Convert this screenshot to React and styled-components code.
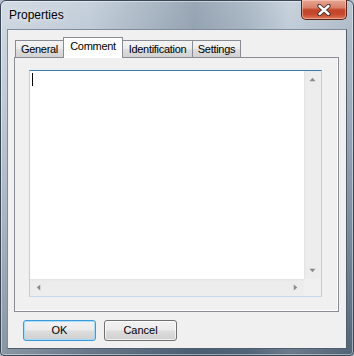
import React from "react";
import styled, { createGlobalStyle, css } from "styled-components";

const GlobalStyle = createGlobalStyle`
  html, body {
    margin: 0;
    padding: 0;
    background: #b4c1ce;
    overflow: hidden;
  }
  * { box-sizing: border-box; }
`;

const Window = styled.div`
  width: 354px;
  height: 356px;
  border: 1px solid #3a4756;
  border-radius: 6px 6px 4px 4px;
  padding: 0 6px 6px 6px;
  display: flex;
  flex-direction: column;
  font-family: "Liberation Sans", Arial, sans-serif;
  background:
    linear-gradient(90deg,
      rgba(255,255,255,0.30) 0%,
      rgba(255,255,255,0.10) 25%,
      rgba(40,60,80,0.25) 55%,
      rgba(40,60,80,0.12) 70%,
      rgba(255,255,255,0.12) 82%,
      rgba(0,0,0,0.05) 100%),
    linear-gradient(180deg, #c0ccd8 0%, #a9b8c7 25%, #8797a9 60%, #56687c 100%);
  box-shadow: inset 0 0 0 1px rgba(255,255,255,0.45);
`;

const TitleBar = styled.div`
  height: 28px;
  display: flex;
  justify-content: space-between;
  align-items: flex-start;
  flex: none;
`;

const Title = styled.div`
  padding: 7px 0 0 2px;
  font-size: 12px;
  line-height: 15px;
  color: #000;
  text-shadow: 0 0 6px rgba(255,255,255,0.9);
`;

const CloseButton = styled.div`
  margin-top: -1px;
  width: 46px;
  height: 20px;
  border: 1px solid #5b2519;
  border-top: none;
  border-radius: 0 0 5px 5px;
  background: linear-gradient(180deg, #e7a795 0%, #d98068 40%, #c2462b 52%, #c8482c 75%, #dc7a5c 100%);
  box-shadow: inset 0 0 0 1px rgba(255,220,210,0.45);
  display: flex;
  align-items: center;
  justify-content: center;
`;

const Client = styled.div`
  flex: 1;
  border: 1px solid;
  border-color: #7d8d9e #4f5d6c #4f5d6c #7d8d9e;
  background: #f0f0f0;
  display: flex;
  flex-direction: column;
  padding: 7px 7px 7px 6px;
`;

const TabControl = styled.div`
  height: 275px;
  display: flex;
  flex-direction: column;
  flex: none;
`;

const TabRow = styled.div`
  height: 21px;
  margin-bottom: -1px;
  padding-left: 1px;
  display: flex;
  align-items: flex-start;
  position: relative;
  z-index: 1;
`;

const Tab = styled.div`
  width: ${(p) => p.$w}px;
  margin-left: -1px;
  &:first-child { margin-left: 0; }
  border: 1px solid #898c95;
  border-bottom: none;
  font-size: 11px;
  letter-spacing: -0.3px;
  line-height: 14px;
  padding-top: 1px;
  text-align: center;
  color: #000;
  ${(p) =>
    p.$active
      ? css`
          height: 21px;
          margin-top: 0;
          background: #ffffff;
          position: relative;
          z-index: 2;
        `
      : css`
          height: 17px;
          margin-top: 3px;
          background: linear-gradient(180deg, #f3f3f3 0%, #ececec 50%, #dedede 51%, #d2d2d2 100%);
        `}
`;

const Panel = styled.div`
  flex: 1;
  border: 1px solid #898c95;
  background: #f0f0f0;
  box-shadow: inset -1px -1px 0 #ffffff;
  padding: 12px 16px 14px 14px;
  display: flex;
`;

const TextBox = styled.div`
  flex: 1;
  border: 1px solid;
  border-color: #3d7bad #b5cfe7 #c5dcef #b5cfe7;
  background: #ffffff;
  display: grid;
  grid-template-columns: 1fr 17px;
  grid-template-rows: 1fr 17px;
`;

const Editor = styled.div`
  padding: 2px 0 0 2px;
`;

const Caret = styled.div`
  width: 1px;
  height: 13px;
  background: #000;
`;

const ScrollBar = styled.div`
  display: flex;
  flex-direction: ${(p) => (p.$vertical ? "column" : "row")};
  justify-content: space-between;
  background: ${(p) =>
    p.$vertical
      ? "linear-gradient(90deg, #e2e2e2 0, #ececec 2px, #ededed 100%)"
      : "linear-gradient(180deg, #e2e2e2 0, #ececec 2px, #ededed 100%)"};
`;

const ArrowButton = styled.div`
  width: 17px;
  height: 17px;
  display: flex;
  align-items: center;
  justify-content: center;
`;

const Corner = styled.div`
  background: #f0f0f0;
`;

const ButtonRow = styled.div`
  margin-top: 8px;
  padding-left: 9px;
  display: flex;
  gap: 8px;
`;

const Button = styled.div`
  width: 73px;
  height: 21px;
  border: 1px solid ${(p) => (p.$default ? "#3c9ada" : "#707070")};
  border-radius: 3px;
  background: linear-gradient(180deg, #f2f2f2 0%, #ebebeb 48%, #dddddd 52%, #cfcfcf 100%);
  box-shadow: inset 0 0 0 1px ${(p) => (p.$default ? "rgba(160,220,250,0.9)" : "rgba(255,255,255,0.7)")};
  font-size: 11px;
  line-height: 19px;
  text-align: center;
  color: #000;
`;

const Arrow = ({ dir }) => {
  const pts = {
    up: "0.5,4 3.5,0.5 6.5,4",
    down: "0.5,0.5 3.5,4 6.5,0.5",
    left: "4,0.5 0.5,3.5 4,6.5",
    right: "0.5,0.5 4,3.5 0.5,6.5",
  }[dir];
  const vert = dir === "up" || dir === "down";
  return (
    <svg width={vert ? 7 : 5} height={vert ? 5 : 7} viewBox={vert ? "0 0 7 4.5" : "0 0 4.5 7"}>
      <polygon points={pts} fill="#8a8a8a" />
    </svg>
  );
};

const tabs = [
  { label: "General", w: 49 },
  { label: "Comment", w: 60, active: true },
  { label: "Identification", w: 71 },
  { label: "Settings", w: 49 },
];

export default function App() {
  return (
    <>
      <GlobalStyle />
      <Window>
        <TitleBar>
          <Title>Properties</Title>
          <CloseButton>
            <svg width="14" height="12" viewBox="0 0 14 12">
              <path d="M2.5 2 L11.5 10 M11.5 2 L2.5 10" stroke="#3b2a28" strokeWidth="4.2" strokeLinecap="round" />
              <path d="M2.5 2 L11.5 10 M11.5 2 L2.5 10" stroke="#ffffff" strokeWidth="2.4" strokeLinecap="round" />
            </svg>
          </CloseButton>
        </TitleBar>
        <Client>
          <TabControl>
            <TabRow>
              {tabs.map((t) => (
                <Tab key={t.label} $w={t.w} $active={t.active}>
                  {t.label}
                </Tab>
              ))}
            </TabRow>
            <Panel>
              <TextBox>
                <Editor>
                  <Caret />
                </Editor>
                <ScrollBar $vertical>
                  <ArrowButton><Arrow dir="up" /></ArrowButton>
                  <ArrowButton><Arrow dir="down" /></ArrowButton>
                </ScrollBar>
                <ScrollBar>
                  <ArrowButton><Arrow dir="left" /></ArrowButton>
                  <ArrowButton><Arrow dir="right" /></ArrowButton>
                </ScrollBar>
                <Corner />
              </TextBox>
            </Panel>
          </TabControl>
          <ButtonRow>
            <Button $default>OK</Button>
            <Button>Cancel</Button>
          </ButtonRow>
        </Client>
      </Window>
    </>
  );
}
